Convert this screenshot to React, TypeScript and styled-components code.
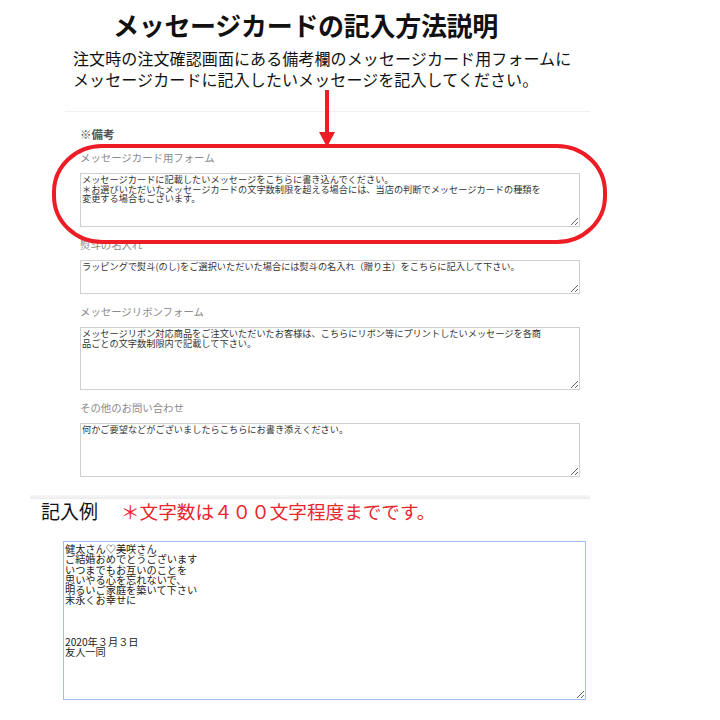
import React from "react";
import styled, { createGlobalStyle } from "styled-components";

const GlobalStyle = createGlobalStyle`
	html, body {
		margin: 0;
		padding: 0;
		background: #fff;
	}
	body {
		font-family: "Noto Sans CJK JP", "Noto Sans", sans-serif;
		color: #222;
	}
`;

const Page = styled.div`
	width: 720px;
	height: 720px;
	overflow: hidden;
	background: #fff;
	padding-top: 9px;
	box-sizing: border-box;
`;
const Title = styled.h1`
	margin: 0 0 7px 113px;
	font-size: 26px;
	line-height: 32px;
	font-weight: 700;
	color: #111;
	letter-spacing: -0.3px;
`;
const Intro = styled.p`
	margin: 0 0 21px 73px;
	font-size: 16px;
	line-height: 21px;
	font-weight: 400;
	color: #111;
	letter-spacing: 0.1px;
`;
const FormPanel = styled.div`
	position: relative;
	margin-left: 65px;
	width: 525px;
	border-top: 1px solid #f0f0f0;
	padding: 15px 0 0 15px;
	box-sizing: border-box;
`;
const Remark = styled.div`
	font-size: 11.5px;
	line-height: 14px;
	font-weight: 700;
	color: #555;
	margin-bottom: 10px;
`;
const Field = styled.div`
	display: flex;
	flex-direction: column;
	margin-bottom: 11px;
`;
const FieldLabel = styled.div`
	font-size: 10.4px;
	line-height: 14px;
	color: #8a8a8a;
	margin-bottom: 8px;
`;
const Area = styled.textarea<{ $h: number }>`
	width: 500px;
	height: ${({ $h }) => $h}px;
	box-sizing: border-box;
	border: 1px solid #cfcfcf;
	padding: 1px 32px 1px 1px;
	margin: 0;
	font-family: "Noto Sans CJK JP", sans-serif;
	font-size: 9.2px;
	line-height: 9.6px;
	color: #333;
	background: #fff;
	outline: none;
	resize: vertical;
	overflow: hidden;
`;
const Callout = styled.svg`
	position: absolute;
	left: -13px;
	top: -22px;
	width: 555px;
	height: 154px;
	pointer-events: none;
	overflow: visible;
`;
const ExampleSection = styled.div`
	margin-top: 18px;
`;
const Band = styled.div`
	margin-left: 30px;
	width: 560px;
	height: 4px;
	background: linear-gradient(to bottom, #f7f7f7, #ececec);
`;
const ExampleHead = styled.div`
	display: flex;
	align-items: center;
	gap: 23px;
	margin: 0 0 18px 41px;
	height: 24px;
`;
const HeadText = styled.span<{ $red?: boolean }>`
	font-size: ${({ $red }) => ($red ? "18.6px" : "19px")};
	line-height: 24px;
	font-weight: 400;
	color: ${({ $red }) => ($red ? "#e8262b" : "#111")};
`;
const ExampleArea = styled.textarea`
	display: block;
	margin-left: 63px;
	width: 523px;
	height: 159px;
	box-sizing: border-box;
	border: 1px solid #9fc0ea;
	padding: 2px 1px;
	font-family: "Noto Sans CJK JP", sans-serif;
	font-size: 10.2px;
	line-height: 10.3px;
	color: #222;
	background: #fff;
	outline: none;
	resize: vertical;
	overflow: hidden;
`;

const fields = [
	{
		label: "メッセージカード用フォーム",
		height: 54,
		text: "メッセージカードに記載したいメッセージをこちらに書き込んでください。\n＊お選びいただいたメッセージカードの文字数制限を超える場合には、当店の判断でメッセージカードの種類を変更する場合もございます。",
	},
	{
		label: "熨斗の名入れ",
		height: 34,
		text: "ラッピングで熨斗(のし)をご選択いただいた場合には熨斗の名入れ（贈り主）をこちらに記入して下さい。",
	},
	{
		label: "メッセージリボンフォーム",
		height: 63,
		text: "メッセージリボン対応商品をご注文いただいたお客様は、こちらにリボン等にプリントしたいメッセージを各商品ごとの文字数制限内で記載して下さい。",
	},
	{
		label: "その他のお問い合わせ",
		height: 54,
		text: "何かご要望などがございましたらこちらにお書き添えください。",
	},
];

const example = [
	"健太さん♡美咲さん",
	"ご結婚おめでとうございます",
	"いつまでもお互いのことを",
	"思いやる心を忘れないで、",
	"明るいご家庭を築いて下さい",
	"末永くお幸せに",
	"",
	"",
	"",
	"2020年３月３日",
	"友人一同",
].join("\n");

export default function App() {
	return (
		<Page>
			<GlobalStyle />
			<Title>メッセージカードの記入方法説明</Title>
			<Intro>
				注文時の注文確認画面にある備考欄のメッセージカード用フォームに
				<br />
				メッセージカードに記入したいメッセージを記入してください。
			</Intro>
			<FormPanel>
				<Remark>※備考</Remark>
				{fields.map((f) => (
					<Field key={f.label}>
						<FieldLabel>{f.label}</FieldLabel>
						<Area $h={f.height} readOnly value={f.text} />
					</Field>
				))}
				{/* red arrow + ring around the card form */}
				<Callout viewBox="0 0 555 154">
					<line x1="275" y1="0" x2="275" y2="44" stroke="#ee1c24" strokeWidth="4" />
					<polygon points="267,42 283,42 275,57" fill="#ee1c24" />
					<rect x="2" y="56" width="551" height="96" rx="48" ry="46" fill="none" stroke="#ee1c24" strokeWidth="4" />
				</Callout>
			</FormPanel>
			<ExampleSection>
				<Band />
				<ExampleHead>
					<HeadText>記入例</HeadText>
					<HeadText $red>＊文字数は４００文字程度までです。</HeadText>
				</ExampleHead>
				<ExampleArea readOnly value={example} />
			</ExampleSection>
		</Page>
	);
}
